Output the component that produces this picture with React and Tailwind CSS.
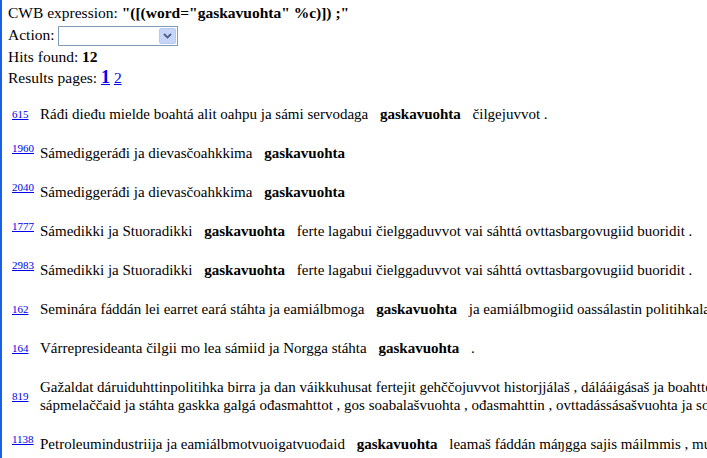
import React from "react";

const hits = [
  {
    id: "615",
    raised: false,
    lines: [["Ráđi dieđu mielde boahtá alit oahpu ja sámi servodaga", "gaskavuohta", "čilgejuvvot ."]],
  },
  { id: "1960", raised: true, lines: [["Sámediggeráđi ja dievasčoahkkima", "gaskavuohta", ""]] },
  { id: "2040", raised: true, lines: [["Sámediggeráđi ja dievasčoahkkima", "gaskavuohta", ""]] },
  {
    id: "1777",
    raised: true,
    lines: [["Sámedikki ja Stuoradikki", "gaskavuohta", "ferte lagabui čielggaduvvot vai sáhttá ovttasbargovugiid buoridit ."]],
  },
  {
    id: "2983",
    raised: true,
    lines: [["Sámedikki ja Stuoradikki", "gaskavuohta", "ferte lagabui čielggaduvvot vai sáhttá ovttasbargovugiid buoridit ."]],
  },
  {
    id: "162",
    raised: false,
    lines: [["Seminára fáddán lei earret eará stáhta ja eamiálbmoga", "gaskavuohta", "ja eamiálbmogiid oassálastin politihkalaš proseassaide ."]],
  },
  {
    id: "164",
    raised: false,
    lines: [["Várrepresideanta čilgii mo lea sámiid ja Norgga stáhta", "gaskavuohta", "."]],
  },
  {
    id: "819",
    raised: false,
    lines: [
      ["Gažaldat dáruiduhttinpolitihka birra ja dan váikkuhusat fertejit gehččojuvvot historjjálaš , dálááigásaš ja boahtteáigásaš perspektiivvas ,", "", ""],
      ["sápmelaččaid ja stáhta gaskka galgá ođasmahttot , gos soabalašvuohta , ođasmahttin , ovttadássásašvuohta ja sohppojuvvon", "gaskavuohta", "leat guovddážis ."],
    ],
  },
  {
    id: "1138",
    raised: true,
    lines: [["Petroleumindustriija ja eamiálbmotvuoigatvuođaid", "gaskavuohta", "leamaš fáddán máŋgga sajis máilmmis , muhto ii vel Norggas ."]],
  },
];

function Line({ parts }) {
  const [left, match, right] = parts;
  return (
    <div className="whitespace-nowrap leading-[18px]">
      {left}
      {match && (
        <>
          {" "}
          <b className="mx-[8px]">{match}</b>{" "}
        </>
      )}
      {right}
    </div>
  );
}

export default function App() {
  return (
    <div
      className="min-h-screen w-full overflow-hidden border-l-2 border-[#1b5fe3] bg-white pl-[6px] pt-[4px] text-black"
      style={{ fontFamily: '"Liberation Serif", "Times New Roman", serif' }}
    >
      <div className="text-[15.5px]">
        <div className="whitespace-nowrap leading-[18px]">
          CWB expression: <b>"([(word="gaskavuohta" %c)]) ;"</b>
        </div>
        <div className="flex h-[26px] items-center whitespace-nowrap">
          <span>Action:</span>
          <span className="ml-[3px] mt-[1px] flex h-[20px] w-[120px] items-center justify-end border border-[#7f9db9] bg-white pr-[1px]">
            <span className="flex h-[16px] w-[17px] items-center justify-center rounded-[2px] border border-[#b7c9ee] bg-[#c6d6fa]">
              <svg width="9" height="6" viewBox="0 0 9 6">
                <path d="M1 1 L4.5 4.5 L8 1" fill="none" stroke="#4d6185" strokeWidth="1.8" />
              </svg>
            </span>
          </span>
        </div>
        <div className="whitespace-nowrap leading-[18px]">
          Hits found: <b>12</b>
        </div>
        <div className="whitespace-nowrap leading-[22px]">
          Results pages:{" "}
          <a href="#" className="font-bold text-[18px] text-[#0000ee] underline">
            1
          </a>{" "}
          <a href="#" className="text-[#0000ee] underline">
            2
          </a>
        </div>
      </div>

      <div className="mt-[5px] text-[15px]">
        {hits.map((h) => (
          <div key={h.id} className="flex items-center py-[10.5px]">
            <div className="flex w-[32px] shrink-0 pl-[4px]">
              <a
                href="#"
                className={`text-[11px] text-[#0000ee] underline ${h.raised ? "mb-[10px] leading-[8px]" : "leading-[12px]"}`}
              >
                {h.id}
              </a>
            </div>
            <div>
              {h.lines.map((l, i) => (
                <Line key={i} parts={l} />
              ))}
            </div>
          </div>
        ))}
      </div>
    </div>
  );
}
